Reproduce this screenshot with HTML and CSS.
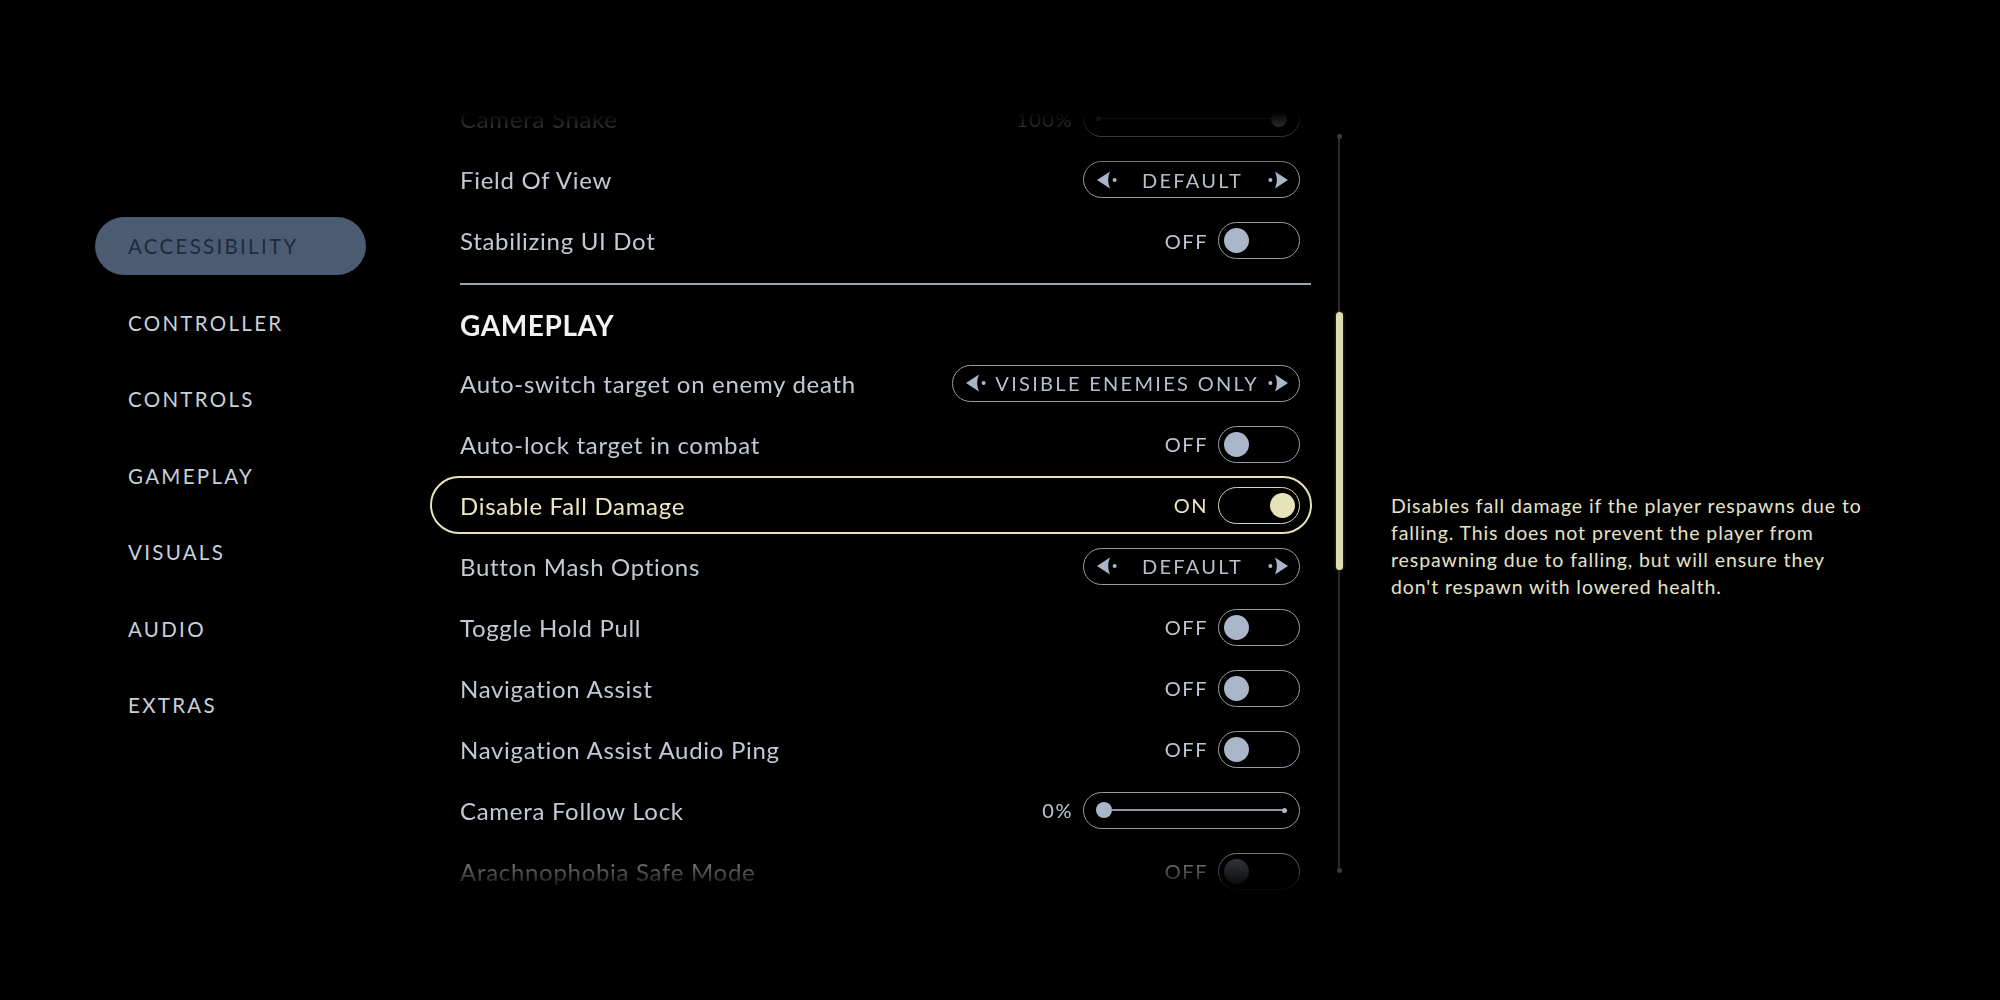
FILE: index.html
```html
<!DOCTYPE html>
<html lang="en">
<head>
<meta charset="utf-8">
<title>Settings</title>
<link rel="stylesheet" href="styles.css">
</head>
<body>
<div class="screen">
  <nav class="nav">
    <div class="nav-item active">ACCESSIBILITY</div>
    <div class="nav-item">CONTROLLER</div>
    <div class="nav-item">CONTROLS</div>
    <div class="nav-item">GAMEPLAY</div>
    <div class="nav-item">VISUALS</div>
    <div class="nav-item">AUDIO</div>
    <div class="nav-item">EXTRAS</div>
  </nav>

  <main class="viewport">
    <div class="list">
      <div class="row">
        <div class="row-inner">
          <span class="label">Camera Shake</span>
          <div class="ctrl">
            <span class="value">100%</span>
            <div class="slider">
              <span class="end-dot"></span><span class="line"></span><span class="knob"></span>
            </div>
          </div>
        </div>
      </div>
      <div class="row">
        <div class="row-inner">
          <span class="label">Field Of View</span>
          <div class="ctrl">
            <div class="selector">
              <svg class="arrow" viewBox="0 0 22 20"><path d="M1 10 L14 1.5 Q10.3 10 14 18.5 Z"/><circle cx="18.6" cy="10" r="2"/></svg>
              <span class="sel-text">DEFAULT</span>
              <svg class="arrow flip" viewBox="0 0 22 20"><path d="M1 10 L14 1.5 Q10.3 10 14 18.5 Z"/><circle cx="18.6" cy="10" r="2"/></svg>
            </div>
          </div>
        </div>
      </div>
      <div class="row">
        <div class="row-inner">
          <span class="label">Stabilizing UI Dot</span>
          <div class="ctrl">
            <span class="value">OFF</span>
            <div class="toggle"><span class="knob"></span></div>
          </div>
        </div>
      </div>

      <div class="divider"></div>
      <h2 class="section">GAMEPLAY</h2>

      <div class="row">
        <div class="row-inner">
          <span class="label">Auto-switch target on enemy death</span>
          <div class="ctrl">
            <div class="selector">
              <svg class="arrow" viewBox="0 0 22 20"><path d="M1 10 L14 1.5 Q10.3 10 14 18.5 Z"/><circle cx="18.6" cy="10" r="2"/></svg>
              <span class="sel-text">VISIBLE ENEMIES ONLY</span>
              <svg class="arrow flip" viewBox="0 0 22 20"><path d="M1 10 L14 1.5 Q10.3 10 14 18.5 Z"/><circle cx="18.6" cy="10" r="2"/></svg>
            </div>
          </div>
        </div>
      </div>
      <div class="row">
        <div class="row-inner">
          <span class="label">Auto-lock target in combat</span>
          <div class="ctrl">
            <span class="value">OFF</span>
            <div class="toggle"><span class="knob"></span></div>
          </div>
        </div>
      </div>
      <div class="row">
        <div class="row-inner focused">
          <span class="label">Disable Fall Damage</span>
          <div class="ctrl">
            <span class="value">ON</span>
            <div class="toggle on"><span class="knob"></span></div>
          </div>
        </div>
      </div>
      <div class="row">
        <div class="row-inner">
          <span class="label">Button Mash Options</span>
          <div class="ctrl">
            <div class="selector">
              <svg class="arrow" viewBox="0 0 22 20"><path d="M1 10 L14 1.5 Q10.3 10 14 18.5 Z"/><circle cx="18.6" cy="10" r="2"/></svg>
              <span class="sel-text">DEFAULT</span>
              <svg class="arrow flip" viewBox="0 0 22 20"><path d="M1 10 L14 1.5 Q10.3 10 14 18.5 Z"/><circle cx="18.6" cy="10" r="2"/></svg>
            </div>
          </div>
        </div>
      </div>
      <div class="row">
        <div class="row-inner">
          <span class="label">Toggle Hold Pull</span>
          <div class="ctrl">
            <span class="value">OFF</span>
            <div class="toggle"><span class="knob"></span></div>
          </div>
        </div>
      </div>
      <div class="row">
        <div class="row-inner">
          <span class="label">Navigation Assist</span>
          <div class="ctrl">
            <span class="value">OFF</span>
            <div class="toggle"><span class="knob"></span></div>
          </div>
        </div>
      </div>
      <div class="row">
        <div class="row-inner">
          <span class="label">Navigation Assist Audio Ping</span>
          <div class="ctrl">
            <span class="value">OFF</span>
            <div class="toggle"><span class="knob"></span></div>
          </div>
        </div>
      </div>
      <div class="row">
        <div class="row-inner">
          <span class="label">Camera Follow Lock</span>
          <div class="ctrl">
            <span class="value">0%</span>
            <div class="slider">
              <span class="knob"></span><span class="line"></span><span class="end-dot"></span>
            </div>
          </div>
        </div>
      </div>
      <div class="row">
        <div class="row-inner">
          <span class="label">Arachnophobia Safe Mode</span>
          <div class="ctrl">
            <span class="value">OFF</span>
            <div class="toggle disabled"><span class="knob"></span></div>
          </div>
        </div>
      </div>
    </div>
  </main>

  <div class="scrollbar">
    <span class="sb-dot"></span>
    <span class="sb-track t1"></span>
    <span class="sb-thumb"></span>
    <span class="sb-track t2"></span>
    <span class="sb-dot"></span>
  </div>

  <aside class="tooltip">
    Disables fall damage if the player respawns due to falling. This does not prevent the player from respawning due to falling, but will ensure they don't respawn with lowered health.
  </aside>
</div>
</body>
</html>
```

FILE: styles.css
```css
html, body {
  margin: 0;
  padding: 0;
  background: #000;
}

body {
  width: 2000px;
  height: 1000px;
  overflow: hidden;
  font-family: Lato, "Noto Sans", "DejaVu Sans", sans-serif;
  color: #c3c9d2;
}

.screen {
  display: flex;
  align-items: flex-start;
  padding-left: 95px;
}

/* ---------- left navigation ---------- */
.nav {
  width: 271px;
  margin-top: 217px;
  display: flex;
  flex-direction: column;
  gap: 18.5px;
}

.nav-item {
  height: 58px;
  line-height: 58px;
  padding-left: 33px;
  border-radius: 29px;
  font-size: 20.5px;
  letter-spacing: 2.3px;
  color: #c9d0d9;
}

.nav-item.active {
  background: #4b5b72;
  color: #1f2a3a;
}

/* ---------- settings list ---------- */
.viewport {
  width: 882px;
  height: 780px;
  margin-top: 112px;
  margin-left: 64px;
  overflow: hidden;
  -webkit-mask-image: linear-gradient(to bottom, transparent 0px, #000 65px, #000 calc(100% - 50px), transparent 100%);
  mask-image: linear-gradient(to bottom, transparent 0px, #000 65px, #000 calc(100% - 50px), transparent 100%);
}

.list {
  margin-top: -24px;
}

.row {
  height: 61px;
  padding: 1.5px 0;
  box-sizing: border-box;
}

.row-inner {
  height: 58px;
  box-sizing: border-box;
  border: 2px solid transparent;
  border-radius: 29px;
  display: flex;
  align-items: center;
  padding-left: 28px;
  padding-right: 10px;
}

.row-inner.focused {
  border-color: #e6e2bb;
}

.label {
  flex: 1;
  font-size: 24px;
  letter-spacing: 0.7px;
  color: #c3c9d2;
}

.focused .label,
.focused .value {
  color: #ece8c5;
}

.ctrl {
  display: flex;
  align-items: center;
  gap: 10px;
}

.value {
  font-size: 20px;
  letter-spacing: 1.5px;
  color: #c0c6cf;
}

/* toggle */
.toggle {
  width: 82px;
  height: 37px;
  box-sizing: border-box;
  border: 1.5px solid #959da9;
  border-radius: 19px;
  display: flex;
  align-items: center;
  padding: 0 4.5px;
}

.toggle .knob {
  width: 25px;
  height: 25px;
  border-radius: 50%;
  background: #a9b5c8;
}

.toggle.on {
  justify-content: flex-end;
  border-color: #d8d5b4;
}

.toggle.on .knob {
  background: #e6e3b8;
}

.toggle.disabled .knob {
  background: #4a4f57;
}

/* selector */
.selector {
  min-width: 217px;
  height: 37px;
  box-sizing: border-box;
  border: 1.5px solid #959da9;
  border-radius: 19px;
  display: flex;
  align-items: center;
  justify-content: space-between;
  gap: 8px;
  padding: 0 10px 0 12px;
}

.arrow {
  width: 22px;
  height: 20px;
  fill: #a9b5c8;
  flex: none;
}

.arrow.flip {
  transform: scaleX(-1);
}

.sel-text {
  font-size: 20px;
  letter-spacing: 2.3px;
  color: #b8bfca;
}

/* slider */
.slider {
  width: 217px;
  height: 37px;
  box-sizing: border-box;
  border: 1.5px solid #959da9;
  border-radius: 19px;
  display: flex;
  align-items: center;
  padding: 0 12px;
}

.slider .knob {
  width: 16px;
  height: 16px;
  border-radius: 50%;
  background: #a9b5c8;
  flex: none;
}

.slider .line {
  flex: 1;
  height: 1.5px;
  background: #8d95a1;
}

.slider .end-dot {
  width: 5px;
  height: 5px;
  border-radius: 50%;
  background: #b0b8c4;
  flex: none;
}

/* divider + section title */
.divider {
  height: 2px;
  margin: 12px 1px 0 30px;
  background: #9ea4b2;
}

.section {
  margin: 0;
  padding: 24px 0 11.5px 30px;
  line-height: 32px;
  font-size: 28px;
  font-weight: 700;
  letter-spacing: 0.6px;
  color: #f2f2f0;
}

/* scrollbar */
.scrollbar {
  width: 8px;
  margin-top: 133.5px;
  margin-left: 23px;
  display: flex;
  flex-direction: column;
  align-items: center;
}

.sb-dot {
  width: 5px;
  height: 5px;
  border-radius: 50%;
  background: #3b3b3a;
}

.sb-track {
  width: 2px;
  background: #2a2925;
}

.sb-track.t1 { height: 173.5px; }
.sb-track.t2 { height: 298px; }

.sb-thumb {
  width: 7px;
  height: 258px;
  border-radius: 4px;
  background: #dedbb3;
  box-shadow: 0 0 3px rgba(230, 226, 180, 0.35);
}

/* tooltip */
.tooltip {
  width: 478px;
  margin-top: 491.5px;
  margin-left: 48px;
  font-size: 19.5px;
  line-height: 27px;
  letter-spacing: 0.9px;
  color: #e5e2c9;
}
```
